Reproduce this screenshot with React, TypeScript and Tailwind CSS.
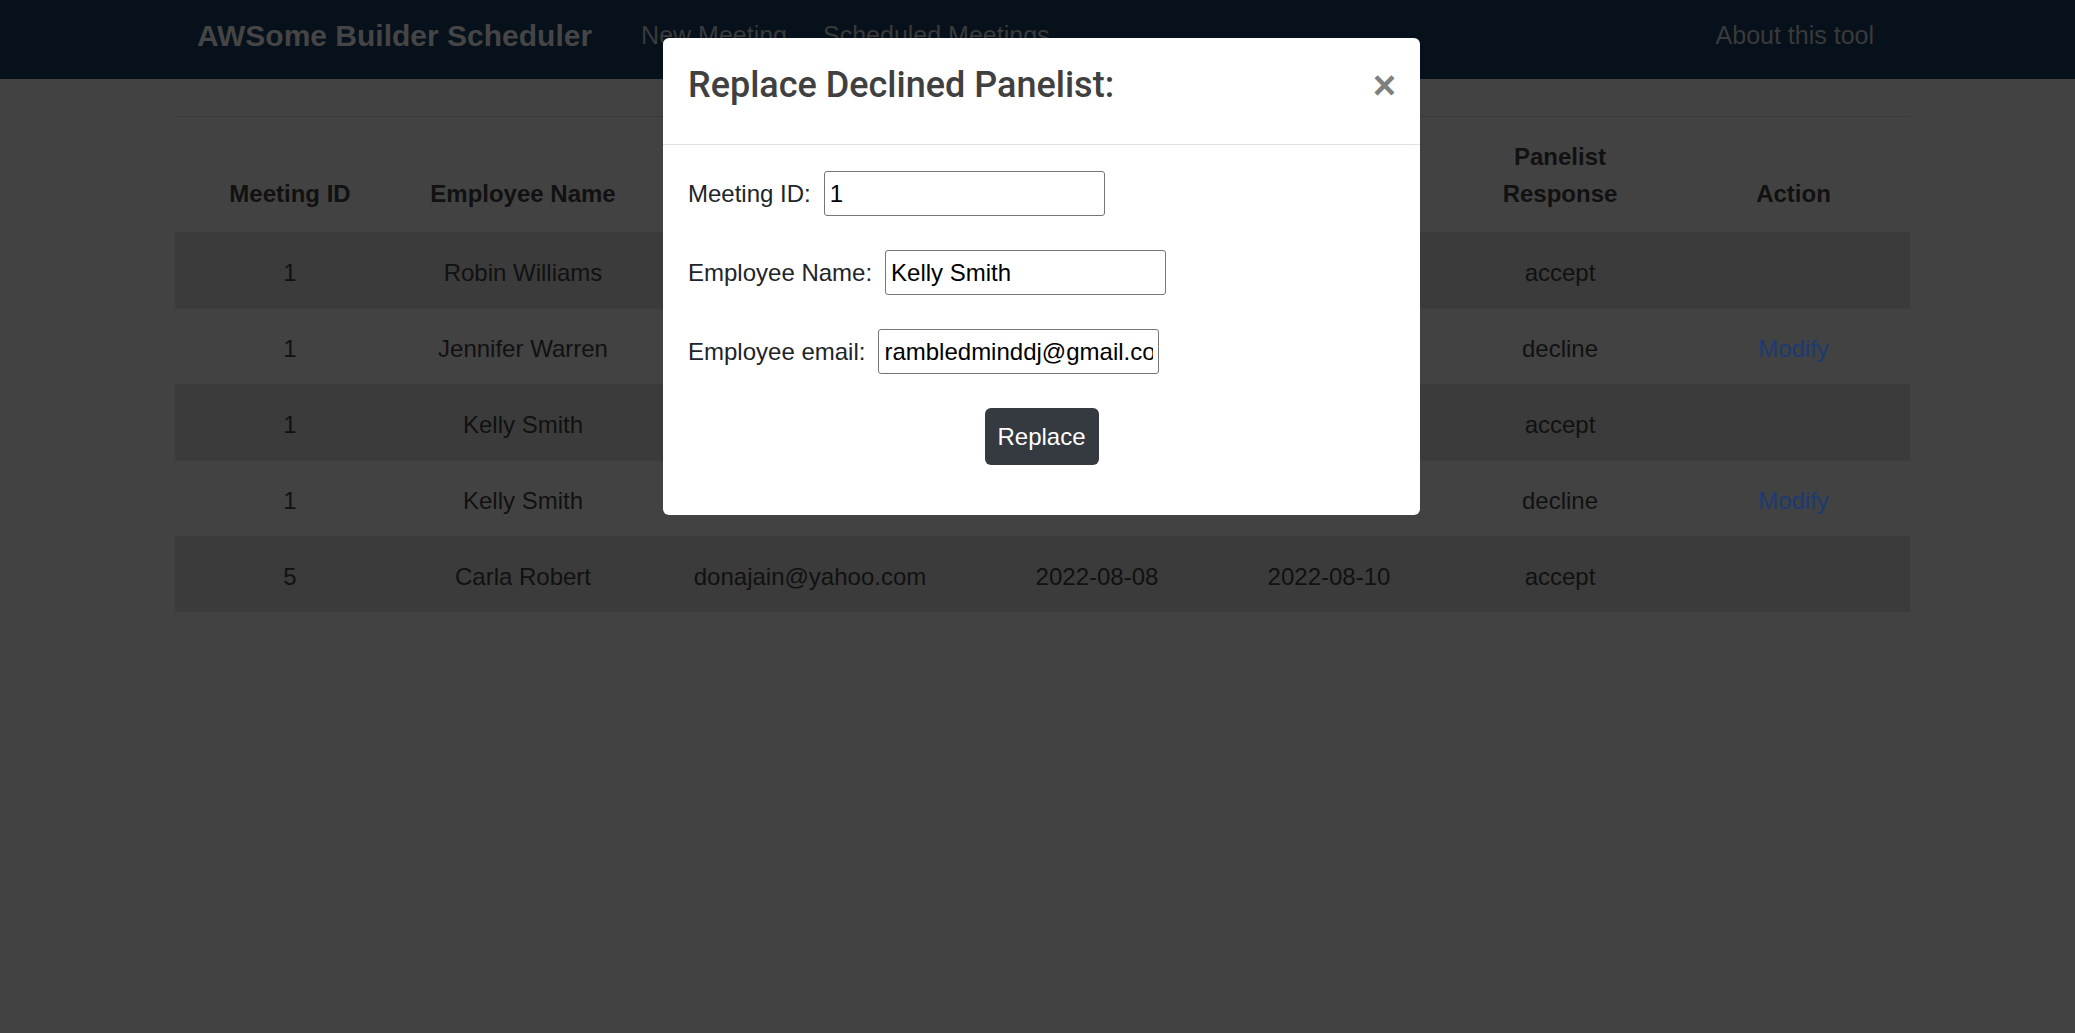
import { useState } from "react";

type Row = {
  id: number;
  name: string;
  email: string;
  start: string;
  end: string;
  response: "accept" | "decline";
};

const ROWS: Row[] = [
  { id: 1, name: "Robin Williams", email: "robinw@gmail.com", start: "2022-08-08", end: "2022-08-10", response: "accept" },
  { id: 1, name: "Jennifer Warren", email: "jwarren@gmail.com", start: "2022-08-08", end: "2022-08-10", response: "decline" },
  { id: 1, name: "Kelly Smith", email: "rambledminddj@gmail.com", start: "2022-08-08", end: "2022-08-10", response: "accept" },
  { id: 1, name: "Kelly Smith", email: "rambledminddj@gmail.com", start: "2022-08-08", end: "2022-08-10", response: "decline" },
  { id: 5, name: "Carla Robert", email: "donajain@yahoo.com", start: "2022-08-08", end: "2022-08-10", response: "accept" },
];

function Field({ label, value, onChange }: { label: string; value: string; onChange: (v: string) => void }) {
  return (
    <div className="flex h-[45px] items-center gap-[13px]">
      <span className="text-[24px] text-[#212529]">{label}</span>
      <input
        className="h-[45px] w-[281px] rounded-[3px] border border-[#767676] bg-white px-[5px] text-[24px] text-black outline-none"
        value={value}
        onChange={(e) => onChange(e.target.value)}
      />
    </div>
  );
}

export default function App() {
  const [meetingId, setMeetingId] = useState("1");
  const [name, setName] = useState("Kelly Smith");
  const [email, setEmail] = useState("rambledminddj@gmail.com");

  return (
    <div className="relative min-h-screen bg-[#424242] font-['Liberation_Sans',Arial,sans-serif]">
      <nav className="flex h-[79px] items-center bg-[#07111b] pb-[8px] pl-[197px] pr-[201px]">
        <span className="text-[30px] font-bold text-[#454545]">AWSome Builder Scheduler</span>
        <div className="ml-[49px] flex gap-[36px] text-[25px] text-[#3a3a3a]">
          <a>New Meeting</a>
          <a>Scheduled Meetings</a>
        </div>
        <a className="ml-auto text-[25px] text-[#3a3a3a]">About this tool</a>
      </nav>

      <main className="ml-[175px] mt-[37px] w-[1735px] border-t border-[#3a3a3a]">
        <table className="w-full table-fixed border-collapse text-center text-[24px] text-[#111]">
          <colgroup>
            <col className="w-[230px]" />
            <col className="w-[236px]" />
            <col className="w-[338px]" />
            <col className="w-[236px]" />
            <col className="w-[228px]" />
            <col className="w-[234px]" />
            <col className="w-[233px]" />
          </colgroup>
          <thead>
            <tr className="h-[115px]">
              {["Meeting ID", "Employee Name", "Employee Email", "Start Date", "End Date", "Panelist Response", "Action"].map((h) => (
                <th key={h} className="px-[20px] pb-[20px] align-bottom text-[24px] font-bold leading-[37px]">
                  {h}
                </th>
              ))}
            </tr>
          </thead>
          <tbody>
            {ROWS.map((r, i) => (
              <tr key={i} className={"h-[76px] border-t border-[#3d3d3d] " + (i % 2 === 0 ? "bg-[#3b3b3b]" : "")}>
                <td className="pt-[5px]">{r.id}</td>
                <td className="pt-[5px]">{r.name}</td>
                <td className="whitespace-nowrap pt-[5px]">{r.email}</td>
                <td className="pt-[5px]">{r.start}</td>
                <td className="pt-[5px]">{r.end}</td>
                <td className="pt-[5px]">{r.response}</td>
                <td className="pt-[5px]">{r.response === "decline" && <a className="text-[#1b3b72]">Modify</a>}</td>
              </tr>
            ))}
          </tbody>
        </table>
      </main>

      {/* modal */}
      <div className="absolute inset-0">
        <div className="ml-[663px] mt-[38px] w-[757px] rounded-[6px] bg-white">
          <div className="flex h-[107px] items-start justify-between border-b border-[#dee2e6] pl-[25px] pr-[24px] pt-[23px]">
            <h4 className="font-['Roboto',sans-serif] text-[36px] font-medium leading-[49px] text-[#404040]">
              Replace Declined Panelist:
            </h4>
            <button className="mt-[2px] text-[40px] font-bold leading-[44px] text-[#808080]">×</button>
          </div>
          <div className="px-[25px] pb-[50px] pt-[26px]">
            <div className="flex flex-col gap-[34px]">
              <Field label="Meeting ID:" value={meetingId} onChange={setMeetingId} />
              <Field label="Employee Name:" value={name} onChange={setName} />
              <Field label="Employee email:" value={email} onChange={setEmail} />
            </div>
            <div className="mt-[34px] flex justify-center">
              <button className="h-[57px] w-[114px] rounded-[6px] bg-[#343a40] text-[24px] text-white">Replace</button>
            </div>
          </div>
        </div>
      </div>
    </div>
  );
}
